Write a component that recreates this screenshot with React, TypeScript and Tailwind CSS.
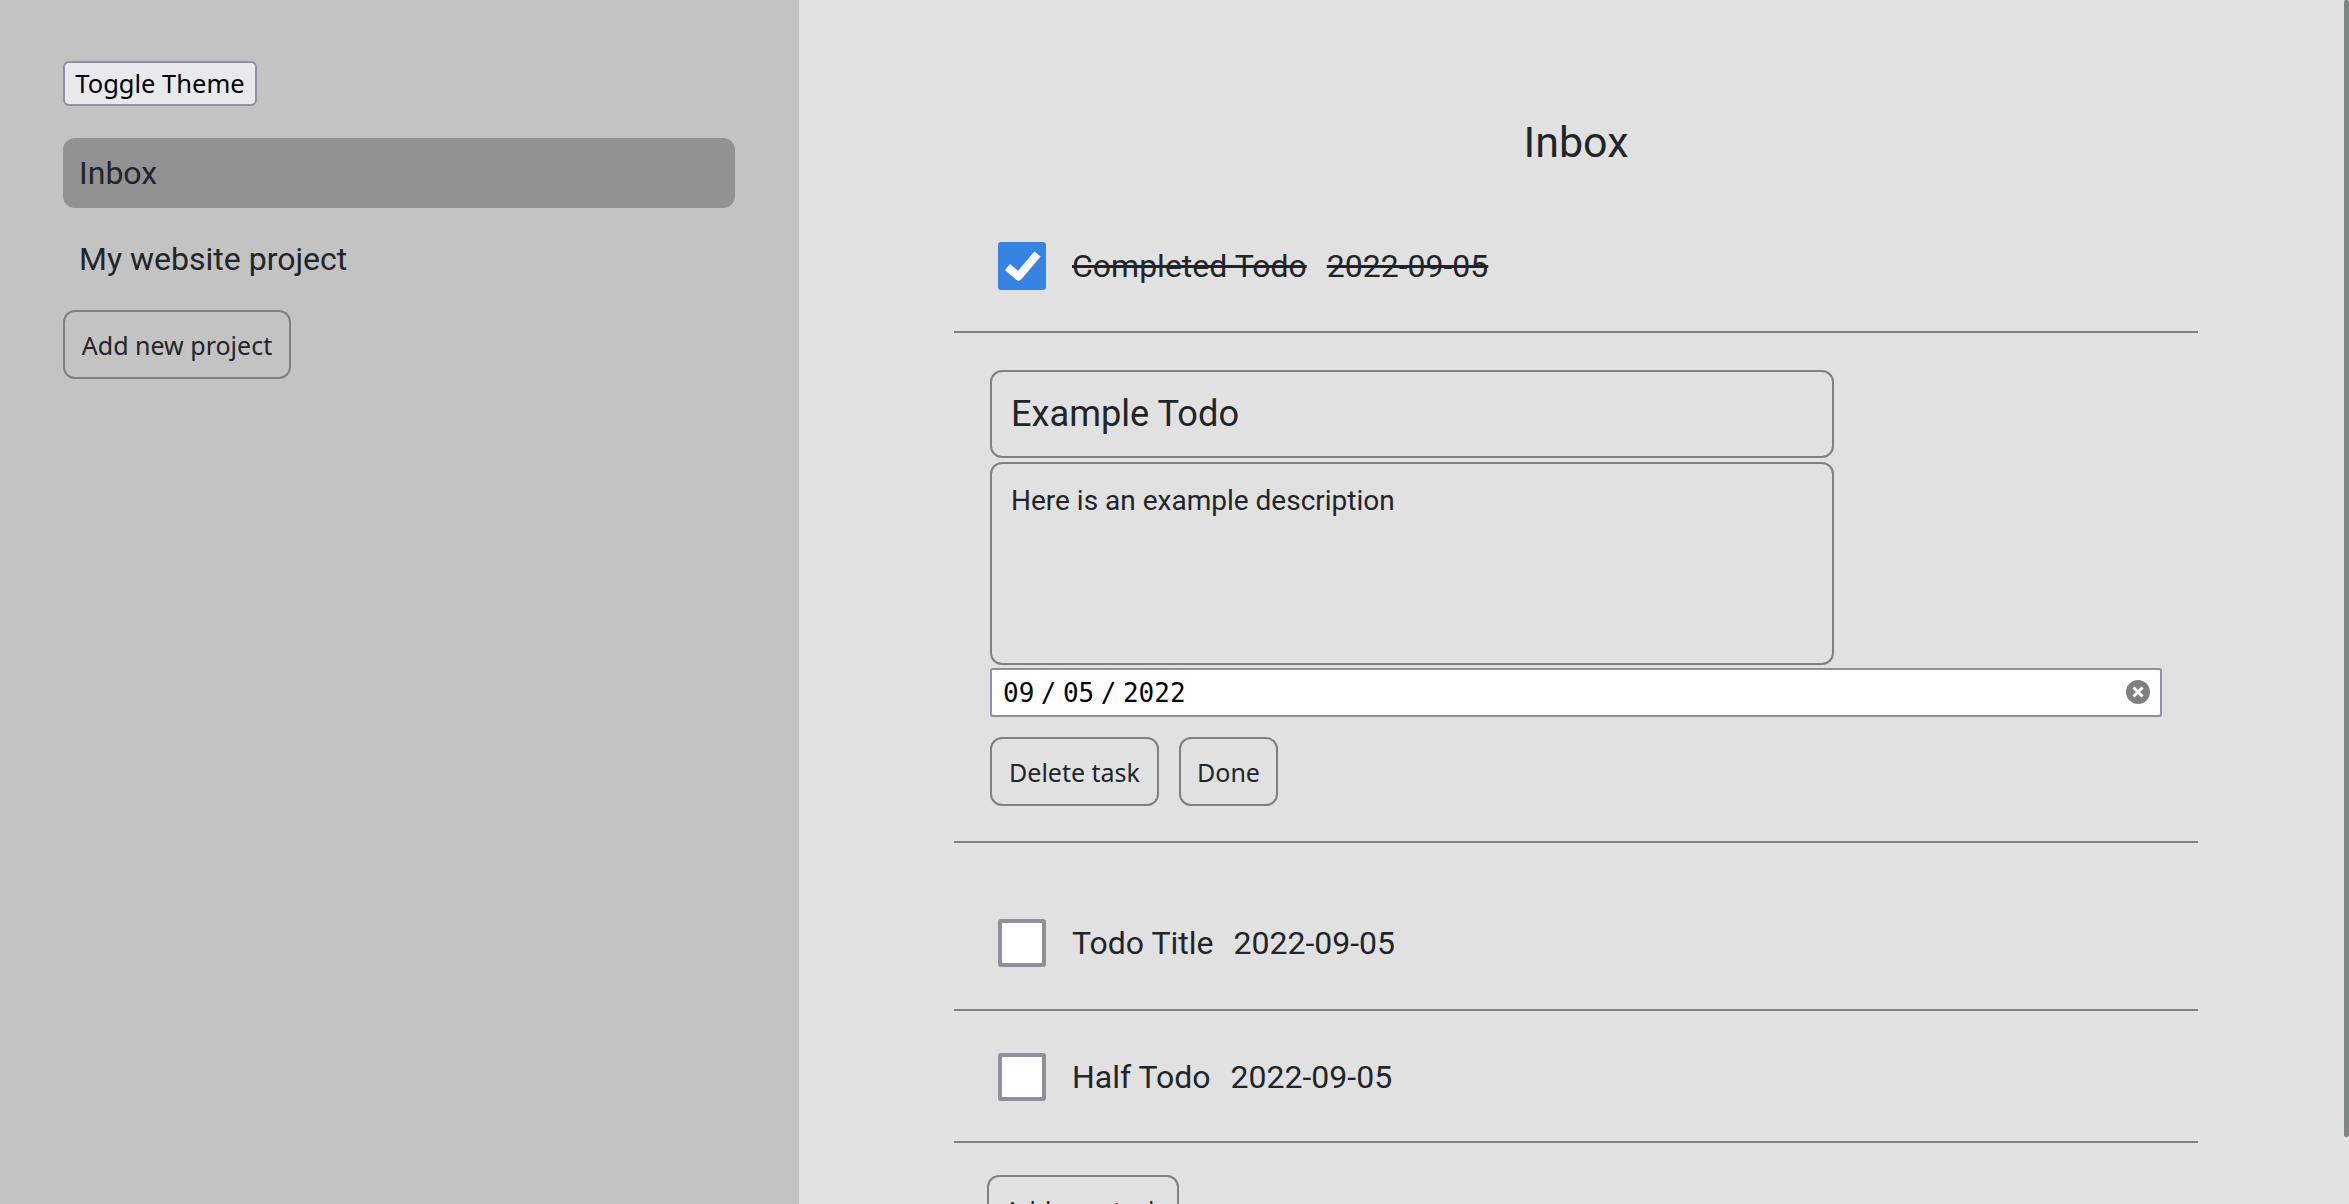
export default function App() {
  return (
    <div className="relative flex h-screen overflow-hidden bg-[#e1e1e1] font-['Roboto',sans-serif] text-[#212529]">
      <Sidebar />
      <main className="ml-[155px] w-[1244px] shrink-0 pt-[112px]">
        <h1 className="mb-[28px] text-center text-[43px] leading-[60px]">Inbox</h1>
        <TodoRow title="Completed Todo" date="2022-09-05" className="h-[133px]" done />
        <EditForm />
        <div className="pt-[33px]">
          <TodoRow title="Todo Title" date="2022-09-05" className="h-[135px]" />
        </div>
        <TodoRow title="Half Todo" date="2022-09-05" className="h-[132px]" />
        <OutlineButton className="ml-[33px] mt-[32px] w-[192px]">Add new task</OutlineButton>
      </main>
      <div className="absolute right-0 top-0 h-[1137px] w-[5px] rounded-[2px] bg-[#7f8484]" />
    </div>
  );
}

function Sidebar() {
  return (
    <aside className="flex w-[799px] shrink-0 flex-col items-start bg-[#c3c3c3] pl-[63px] pt-[61px]">
      <button className="h-[45px] w-[194px] rounded-[6px] border-2 border-[#8f8f9d] bg-[#e9e9ed] pt-[1px] font-['Noto_Sans',sans-serif] text-[25.5px] leading-none text-black">
        Toggle Theme
      </button>
      <div className="mt-[32px] flex h-[70px] w-[672px] items-center rounded-[12px] bg-[#929292] pl-[16px] text-[32px]">
        Inbox
      </div>
      <div className="mt-[16px] flex h-[70px] w-[672px] items-center pl-[16px] text-[32px]">
        My website project
      </div>
      <OutlineButton className="mt-[16px] w-[228px]">Add new project</OutlineButton>
    </aside>
  );
}

function OutlineButton({ children, className }: { children: string; className: string }) {
  return (
    <button
      className={`block h-[69px] shrink-0 rounded-[12px] border-2 border-[#808080] pt-[2px] font-['Noto_Sans',sans-serif] text-[25px] leading-none ${className}`}
    >
      {children}
    </button>
  );
}

function TodoRow({
  title,
  date,
  done,
  className,
}: {
  title: string;
  date: string;
  done?: boolean;
  className: string;
}) {
  return (
    <div className={`flex items-center gap-[26px] border-b-2 border-[#808080] pl-[44px] pt-[1px] text-[32px] ${className}`}>
      {done ? (
        <span className="size-12 rounded-[3px] bg-[#3584e4]">
          <svg viewBox="0 0 48 48" className="size-12">
            <path d="M9.5 25l11 9.5L39.5 12" fill="none" stroke="#fff" strokeWidth="8" strokeLinejoin="round" />
          </svg>
        </span>
      ) : (
        <span className="size-12 rounded-[3px] border-[4px] border-[#8f8f9d] bg-white" />
      )}
      <span className={`flex gap-[20px] ${done ? "line-through" : ""}`}>
        <span>{title}</span>
        <span>{date}</span>
      </span>
    </div>
  );
}

function EditForm() {
  return (
    <div className="flex flex-col items-start border-b-2 border-[#808080] pb-[35px] pl-[36px] pr-[36px] pt-[37px]">
      <input
        readOnly
        value="Example Todo"
        className="h-[88px] w-[844px] rounded-[12px] border-2 border-[#808080] bg-transparent px-[19px] pb-[2px] text-[36.2px] outline-none"
      />
      <textarea
        readOnly
        value="Here is an example description"
        className="mt-[4px] block h-[203px] w-[844px] resize-none rounded-[12px] border-2 border-[#808080] bg-transparent px-[19px] py-[21px] text-[28px] leading-[32px] outline-none"
      />
      <div className="mt-[3px] flex h-[49px] w-full items-center justify-between rounded-[3px] border-2 border-[#8f8f9d] bg-white pl-[11px] pr-[10px] pt-[1px] font-['DejaVu_Sans_Mono',monospace] text-[26px] text-black">
        <span>
          09<span className="mx-[6.5px]">/</span>05<span className="mx-[6.5px]">/</span>2022
        </span>
        <svg viewBox="0 0 24 24" className="mb-[3px] size-[24px]">
          <circle cx="12" cy="12" r="12" fill="#808080" />
          <path d="M7.5 7.5l9 9M16.5 7.5l-9 9" stroke="#fff" strokeWidth="3" />
        </svg>
      </div>
      <div className="mt-[20px] flex gap-[20px]">
        <OutlineButton className="w-[169px]">Delete task</OutlineButton>
        <OutlineButton className="w-[99px]">Done</OutlineButton>
      </div>
    </div>
  );
}
